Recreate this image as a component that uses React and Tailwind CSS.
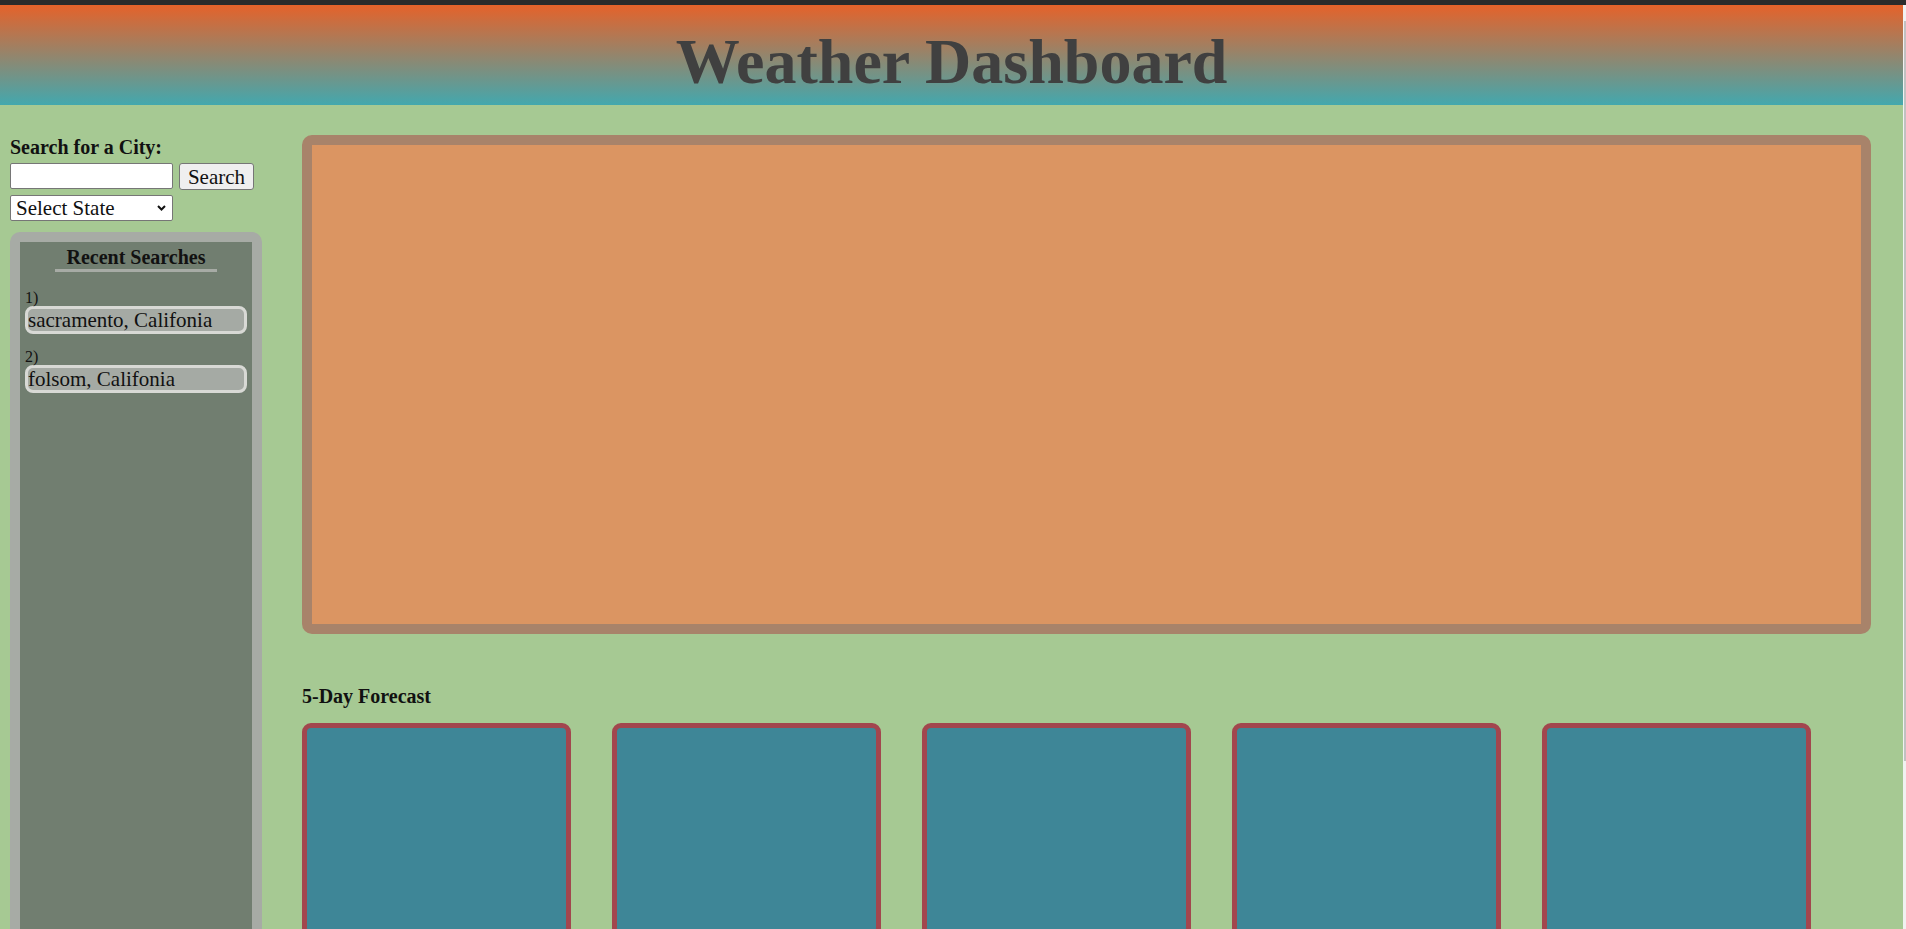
import { useState } from 'react';

const recent = ['sacramento, Califonia', 'folsom, Califonia'];

function SearchPanel() {
  const [city, setCity] = useState('');
  const [state, setState] = useState('');

  return (
    <aside className="ml-[10px] w-[252px] shrink-0 flex flex-col">
      <label className="block text-[20px] leading-[24px] font-bold text-[#111]">Search for a City:</label>
      <div className="mt-[4px] flex items-start">
        <input
          value={city}
          onChange={(e) => setCity(e.target.value)}
          className="w-[163px] h-[26px] bg-white border border-[#767676] rounded-[2px] px-[3px] text-[20px]"
        />
        <button className="ml-[6px] w-[75px] h-[27px] bg-[#efefef] border border-[#767676] rounded-[3px] text-[21px] leading-[22px] text-[#111]">
          Search
        </button>
      </div>
      {/* state picker */}
      <div className="relative mt-[5px] w-[163px]">
        <select
          value={state}
          onChange={(e) => setState(e.target.value)}
          className="appearance-none block w-[163px] h-[26px] bg-white border border-[#767676] rounded-[2px] pl-[5px] text-[21px] leading-[22px] text-[#111]"
        >
          <option value="">Select State</option>
          <option value="CA">California</option>
        </select>
        <svg className="absolute right-[7px] top-[10px] pointer-events-none" width="9" height="6" viewBox="0 0 9 6">
          <path d="M1 1l3.5 3.5L8 1" fill="none" stroke="#111" strokeWidth="2" />
        </svg>
      </div>

      {/* Recent searches */}
      <div className="mt-[11px] h-[720px] bg-[#a7aba5] rounded-t-[10px] px-[10px] pt-[10px]">
        <div className="h-full bg-[#717e70] px-[5px] pt-[4px]">
          <h3 className="mx-auto w-fit px-[11px] border-b-[3px] border-[#a7aba5] text-[20px] leading-[23px] font-bold text-[#111]">
            Recent Searches
          </h3>
          <ul className="mt-[18px]">
            {recent.map((item, i) => (
              <li key={item} className={i > 0 ? 'mt-[15px]' : ''}>
                <p className="text-[16px] leading-[16px] text-[#111]">{i + 1})</p>
                <button className="block w-full h-[28px] text-left bg-[#a5aaa4] border-[3px] border-[#d8d9d5] rounded-[8px] text-[21px] leading-[22px] text-[#111]">
                  {item}
                </button>
              </li>
            ))}
          </ul>
        </div>
      </div>
    </aside>
  );
}

function Forecast() {
  return (
    <section className="mt-[50px]">
      <h4 className="text-[20px] leading-[24px] font-bold text-[#111]">5-Day Forecast</h4>
      <div className="mt-[15px] flex gap-[41px]">
        {[0, 1, 2, 3, 4].map((d) => (
          <div
            key={d}
            className="w-[269px] h-[320px] shrink-0 bg-[#3e8697] border-[5px] border-[#a2464e] rounded-[9px]"
          />
        ))}
      </div>
    </section>
  );
}

export default function App() {
  return (
    <div className="h-[929px] overflow-hidden flex flex-col font-['Liberation_Serif',serif]">
      <div className="h-[5px] shrink-0 bg-[#2b2b2b]" />
      <div className="flex flex-1 min-h-0">
        <div className="flex-1 min-w-0 bg-[#a6c993]">
          {/* Header */}
          <header className="h-[100px] pt-[25px] bg-[linear-gradient(to_bottom,#e5622a,#43a8ae)] text-center">
            <h1 className="text-[64px] leading-[64px] font-bold text-[#404040]">Weather Dashboard</h1>
          </header>

          <div className="flex pt-[30px]">
            <SearchPanel />
            <main className="ml-[40px] w-[1569px]">
              {/* Current weather */}
              <div className="h-[499px] bg-[#db9562] border-[10px] border-[#a8836a] rounded-[10px]" />
              <Forecast />
            </main>
          </div>
        </div>
        {/* scrollbar */}
        <div className="w-[3px] shrink-0 bg-[#f1f1f1] pt-[16px]">
          <div className="ml-[1px] w-[2px] h-[740px] bg-[#c1c1c1]" />
        </div>
      </div>
    </div>
  );
}
